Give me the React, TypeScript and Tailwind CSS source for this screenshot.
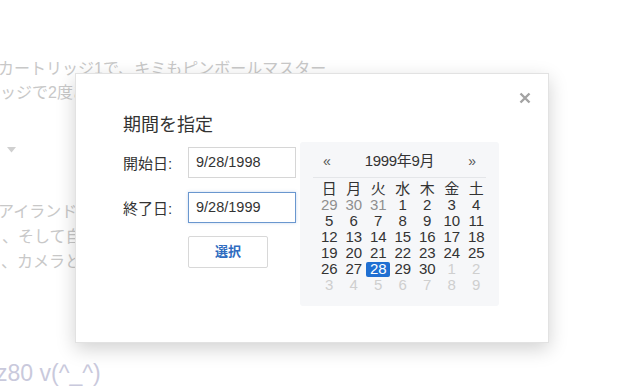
import React from "react";

const FONT = '"Liberation Sans", "Noto Sans CJK JP", sans-serif';

type Cell = { d: number; t: "prev" | "cur" | "next"; sel?: boolean };

const weeks: Cell[][] = [
  [
    { d: 29, t: "prev" }, { d: 30, t: "prev" }, { d: 31, t: "prev" },
    { d: 1, t: "cur" }, { d: 2, t: "cur" }, { d: 3, t: "cur" }, { d: 4, t: "cur" },
  ],
  [5, 6, 7, 8, 9, 10, 11].map((d) => ({ d, t: "cur" as const })),
  [12, 13, 14, 15, 16, 17, 18].map((d) => ({ d, t: "cur" as const })),
  [19, 20, 21, 22, 23, 24, 25].map((d) => ({ d, t: "cur" as const })),
  [
    { d: 26, t: "cur" }, { d: 27, t: "cur" }, { d: 28, t: "cur", sel: true },
    { d: 29, t: "cur" }, { d: 30, t: "cur" }, { d: 1, t: "next" }, { d: 2, t: "next" },
  ],
  [3, 4, 5, 6, 7, 8, 9].map((d) => ({ d, t: "next" as const })),
];

const dows = ["日", "月", "火", "水", "木", "金", "土"];

function Calendar() {
  return (
    <div className="w-[199px] h-[164px] bg-[#f6f7f9] rounded-[3px]">
      <div className="mx-[13px] h-[36px] pt-[4px] px-[10px] flex items-center justify-between border-b border-[#e4e6e9] text-[15px] text-[#333]">
        <span className="text-[#555] text-[14px]">«</span>
        <span className="tracking-[-0.3px]">1999年9月</span>
        <span className="text-[#555] text-[14px]">»</span>
      </div>
      <div className="ml-[17px] mt-[3px] grid grid-cols-[repeat(7,24.5px)] auto-rows-[16px] text-[15px] leading-[16px]">
        {dows.map((w) => (
          <div key={w} className="text-center text-[#333]">{w}</div>
        ))}
        {weeks.flat().map((c, i) => (
          <div key={i} className="flex items-center justify-center">
            <span
              className={
                c.sel
                  ? "w-[24px] h-[15px] bg-[#1f6fd2] text-white rounded-[2px] flex items-center justify-center"
                  : c.t === "prev"
                  ? "text-[#8f8f8f]"
                  : c.t === "next"
                  ? "text-[#cfcfcf]"
                  : "text-[#333]"
              }
            >
              {c.d}
            </span>
          </div>
        ))}
      </div>
    </div>
  );
}

export default function App() {
  return (
    <div
      className="relative w-[640px] h-[391px] overflow-hidden bg-white"
      style={{ fontFamily: FONT }}
    >
      {/* faded background page */}
      <div className="pt-[57px] text-[#c8c8c8] text-[16px] leading-[24px] whitespace-nowrap">
        <div className="-ml-[2px]">カートリッジ1で、キミもピンボールマスター</div>
        <div className="ml-0">ッジで2度あそべる</div>
        <div className="mt-[40px] ml-[7px] h-[10px] flex items-center">
          <svg width="9" height="6" viewBox="0 0 9 6">
            <path d="M0 0 L9 0 L4.5 5.5 Z" fill="#d0d0d0" />
          </svg>
        </div>
        <div className="mt-[44px] leading-[25px]">
          <div className="-ml-[2px]">アイランド』のテーマ</div>
          <div className="ml-[2px]">、そして自分だけの</div>
          <div className="ml-[1px]">、カメラとともに</div>
        </div>
        <div className="mt-[84px] -ml-[4px] text-[23px] leading-[30px] text-[#c9c9dc]">
          z80 v(^_^)
        </div>
      </div>

      {/* modal */}
      <div className="absolute left-[75px] top-[73px] w-[474px] h-[270px] bg-white border border-[#e2e2e2] shadow-[0_6px_18px_rgba(0,0,0,0.18)]">
        <div className="absolute right-[17px] top-[18px]">
          <svg width="12" height="12" viewBox="0 0 12 12">
            <path d="M1.5 1.5 L10.5 10.5 M10.5 1.5 L1.5 10.5" stroke="#a3a3a3" strokeWidth="2.4" />
          </svg>
        </div>
        <div className="pl-[47px] pt-[39px]">
          <div className="text-[18px] leading-[24px] text-[#333]">期間を指定</div>
          <div className="mt-[5px] flex">
            <div className="w-[177px] pt-[5px]">
              <div className="flex items-center h-[31px]">
                <div className="w-[65px] text-[15px] text-[#333] pt-[4px]">開始日:</div>
                <div className="w-[108px] h-[31px] border border-[#d6d6d6] px-[7px] flex items-center text-[14.5px] text-[#333]">
                  9/28/1998
                </div>
              </div>
              <div className="flex items-center h-[31px] mt-[14px]">
                <div className="w-[65px] text-[15px] text-[#333] pt-[4px]">終了日:</div>
                <div className="w-[108px] h-[31px] border border-[#6a97cf] px-[7px] flex items-center text-[14.5px] text-[#333] shadow-[0_0_3px_rgba(102,150,210,0.35)]">
                  9/28/1999
                </div>
              </div>
              <div className="ml-[65px] mt-[13px] w-[80px] h-[32px] border border-[#d8d8d8] rounded-[2px] flex items-center justify-center text-[13px] font-bold text-[#2f6cc0]">
                選択
              </div>
            </div>
            <Calendar />
          </div>
        </div>
      </div>
    </div>
  );
}
